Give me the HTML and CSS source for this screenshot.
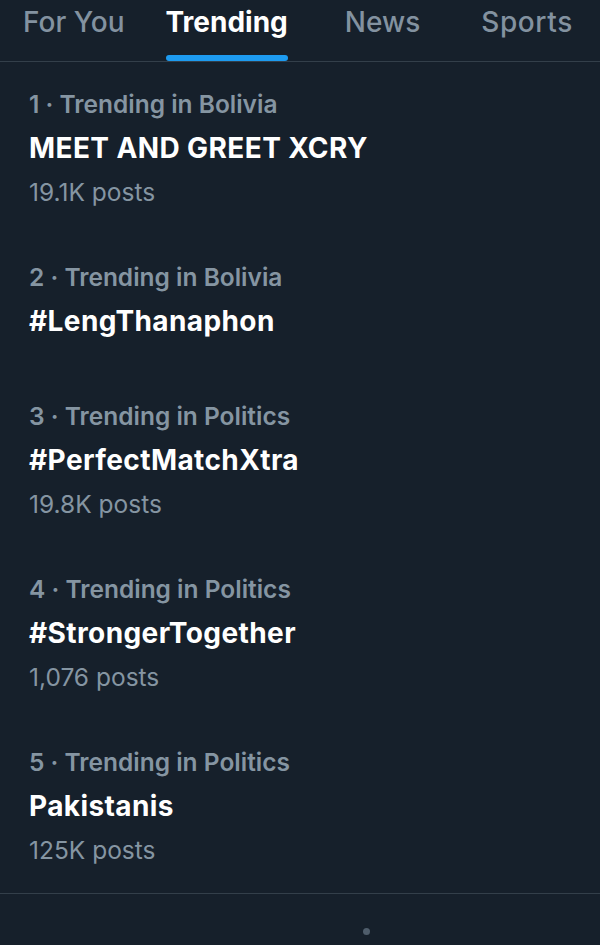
FILE: index.html
```html
<!DOCTYPE html>
<html>
<head>
<meta charset="utf-8">
<link rel="stylesheet" href="styles.css">
</head>
<body>
<div class="page">
  <nav class="tabs">
    <div class="tab t1">For You</div>
    <div class="tab t2 active">Trending<span class="bar"></span></div>
    <div class="tab t3">News</div>
    <div class="tab t4">Sports</div>
  </nav>
  <ul class="trends">
    <li class="trend">
      <div class="meta">1 · Trending in Bolivia</div>
      <div class="title">MEET AND GREET XCRY</div>
      <div class="count">19.1K posts</div>
    </li>
    <li class="trend no-count">
      <div class="meta">2 · Trending in Bolivia</div>
      <div class="title">#LengThanaphon</div>
    </li>
    <li class="trend">
      <div class="meta">3 · Trending in Politics</div>
      <div class="title">#PerfectMatchXtra</div>
      <div class="count">19.8K posts</div>
    </li>
    <li class="trend">
      <div class="meta">4 · Trending in Politics</div>
      <div class="title">#StrongerTogether</div>
      <div class="count">1,076 posts</div>
    </li>
    <li class="trend">
      <div class="meta">5 · Trending in Politics</div>
      <div class="title">Pakistanis</div>
      <div class="count">125K posts</div>
    </li>
  </ul>
  <div class="footer"><span class="dot"></span></div>
</div>
</body>
</html>
```
FILE: styles.css
```css
html, body {
  margin: 0;
  padding: 0;
  background: #16202b;
}
body {
  font-family: Inter, "Noto Sans", sans-serif;
  color: #e7e9ea;
}
.page {
  width: 600px;
  height: 945px;
  overflow: hidden;
  background: #16202b;
}
.tabs {
  display: flex;
  height: 62px;
  border-bottom: 1px solid #333f4a;
  padding-left: 23px;
  box-sizing: border-box;
}
.tab {
  position: relative;
  font-size: 28px;
  line-height: 44px;
  font-weight: 500;
  color: #8392a0;
}
.t1 { margin-right: 41px; }
.t2 { margin-right: 57px; }
.t3 { margin-right: 61px; }
.t4 { letter-spacing: 0.6px; }
.tab.active {
  color: #ffffff;
  font-weight: 700;
}
.bar {
  position: absolute;
  left: 0;
  right: 0;
  top: 55px;
  height: 6px;
  border-radius: 3px;
  background: #1d9bf0;
}
.trends {
  list-style: none;
  margin: 0;
  padding: 0;
  border-bottom: 1px solid #333f4a;
}
.trend {
  padding: 20px 29px 21px;
}
.trend.no-count {
  padding-bottom: 31px;
}
.meta {
  font-size: 24.5px;
  line-height: 44px;
  font-weight: 600;
  color: #8595a2;
}
.title {
  font-size: 28px;
  line-height: 44px;
  font-weight: 700;
  color: #ffffff;
  letter-spacing: 0.4px;
}
.count {
  font-size: 24.5px;
  line-height: 44px;
  color: #8595a2;
}
.footer {
  display: flex;
  justify-content: center;
  padding-top: 34px;
  padding-left: 132px;
}
.dot {
  width: 7px;
  height: 7px;
  border-radius: 50%;
  background: #4f5d6b;
}
```
